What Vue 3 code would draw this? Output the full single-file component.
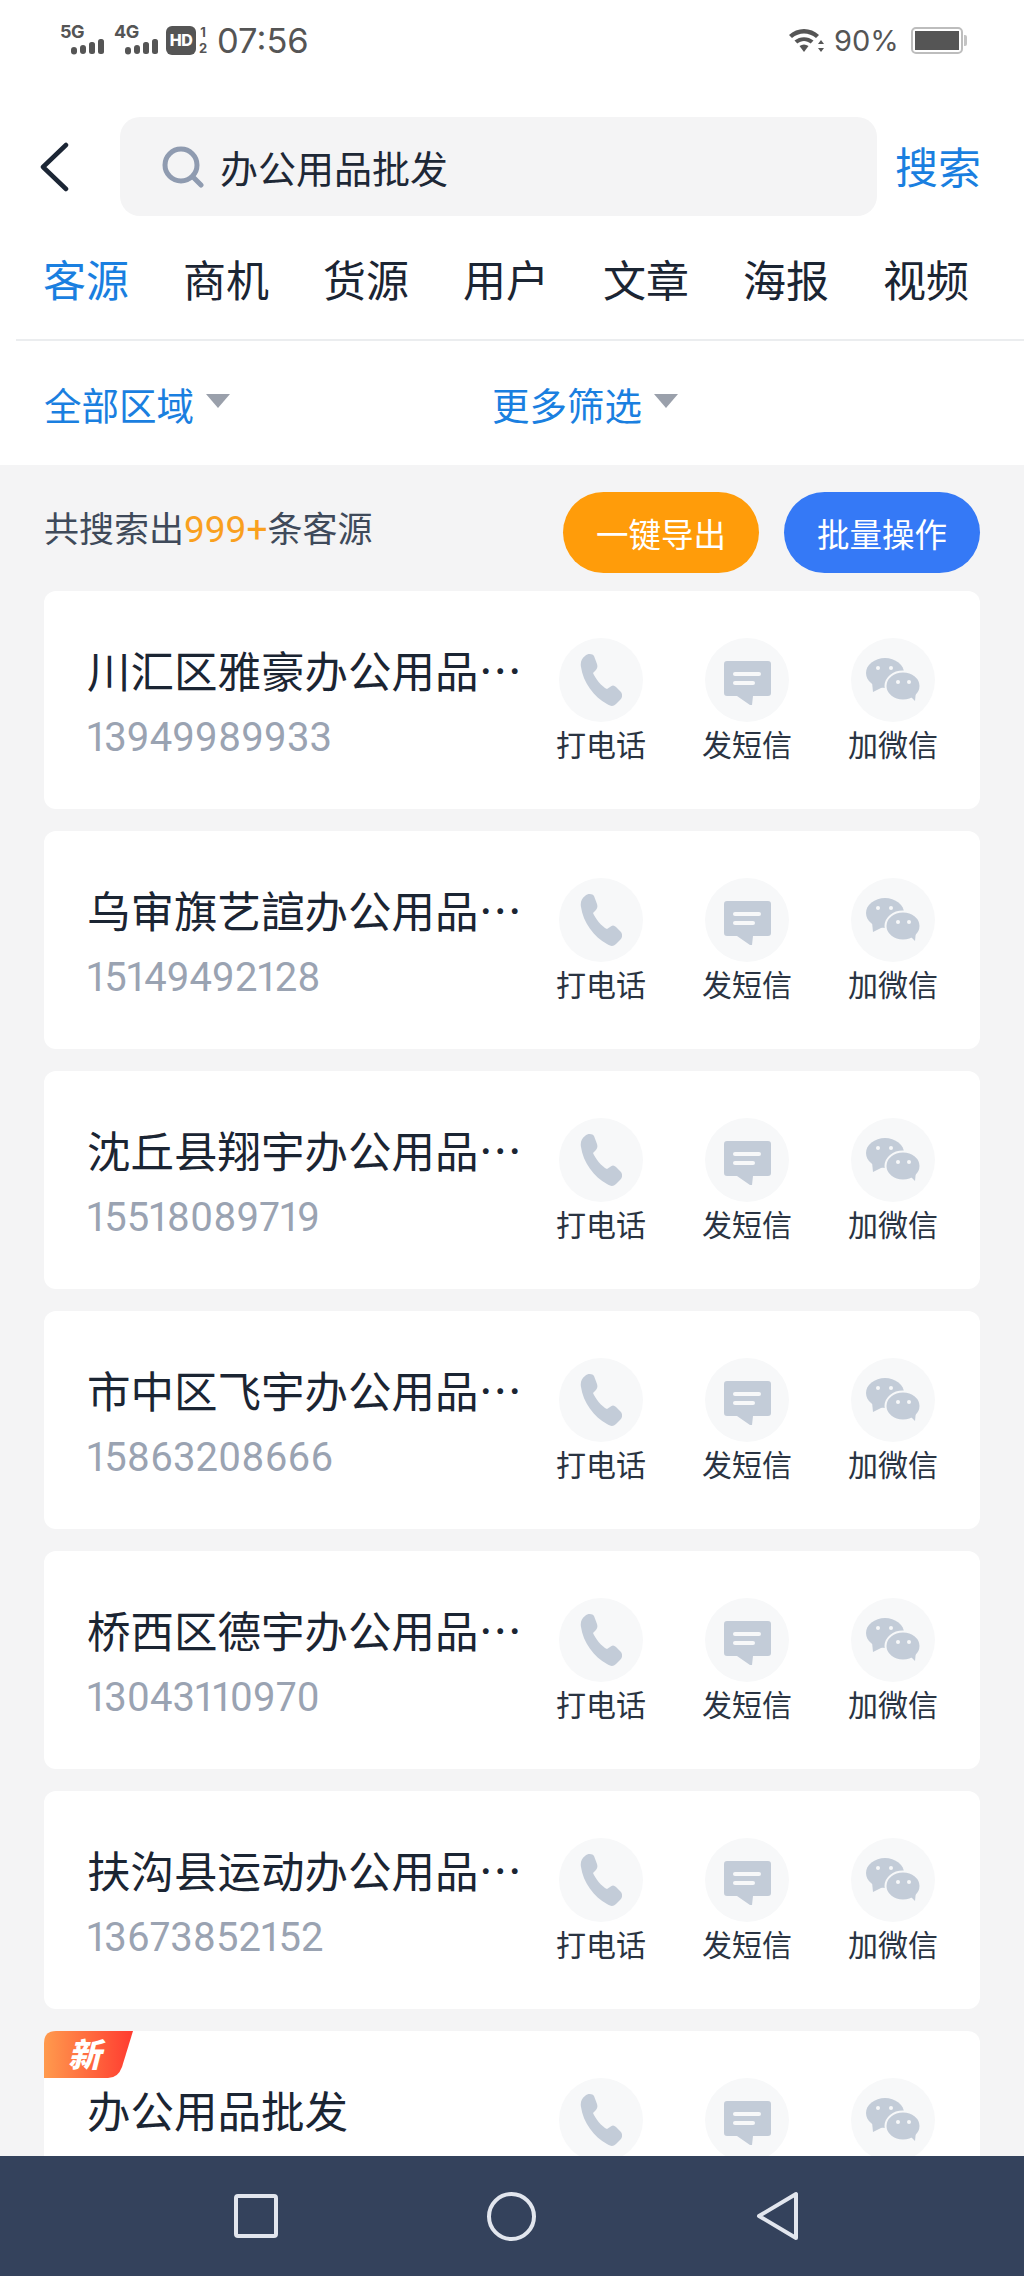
<script setup>
const tabs = ['客源', '商机', '货源', '用户', '文章', '海报', '视频']
const filters = ['全部区域', '更多筛选']
const cards = [
  { name: '川汇区雅豪办公用品…', phone: '13949989933' },
  { name: '乌审旗艺諠办公用品…', phone: '15149492128' },
  { name: '沈丘县翔宇办公用品…', phone: '15518089719' },
  { name: '市中区飞宇办公用品…', phone: '15863208666' },
  { name: '桥西区德宇办公用品…', phone: '13043110970' },
  { name: '扶沟县运动办公用品…', phone: '13673852152' },
  { name: '办公用品批发', phone: '', isNew: true }
]
</script>

<template>
  <div class="page">
    <div class="status">
      <div class="sig">
        <span class="net">5G</span>
        <svg class="bars" width="33" height="16" viewBox="0 0 33 16"><rect x="0" y="8" width="6" height="7.500" rx="3"/><rect x="9" y="6" width="6" height="9" rx="3"/><rect x="18" y="3" width="6" height="12" rx="2.500"/><rect x="27" y="0" width="6" height="15" rx="2.500"/></svg>
      </div>
      <div class="sig">
        <span class="net">4G</span>
        <svg class="bars" width="33" height="16" viewBox="0 0 33 16"><rect x="0" y="8" width="6" height="7.500" rx="3"/><rect x="9" y="6" width="6" height="9" rx="3"/><rect x="18" y="3" width="6" height="12" rx="2.500"/><rect x="27" y="0" width="6" height="15" rx="2.500"/></svg>
      </div>
      <span class="hd">HD</span>
      <span class="sim"><i>1</i><i>2</i></span>
      <span class="time">07:56</span>
      <svg class="wifi" width="36" height="27" viewBox="0 0 36 27">
        <path d="M1 8C9 0 23 0 31 8L28 11C21 5 11 5 4 11Z" fill="#555"/>
        <path d="M6.500 13.500C12 9 20 9 25.500 13.500L22.700 16.500C18.500 13 13.500 13 9.300 16.500Z" fill="#555"/>
        <path d="M11.500 19C14.500 17 17.500 17 20.500 19L16 25Z" fill="#555"/>
        <path d="M33 13L36 17H30ZM33 25L30 21H36Z" fill="#555"/>
      </svg>
      <span class="pct">90%</span>
      <div class="battery"><div class="level"></div></div>
      <div class="tip"></div>
    </div>

    <div class="search-row">
      <svg class="back" width="30" height="50" viewBox="0 0 30 50"><path d="M26 3L3 25L26 47" fill="none" stroke="#1c2635" stroke-width="4.500" stroke-linecap="round" stroke-linejoin="round"/></svg>
      <div class="search-box">
        <svg class="lens" width="42" height="42" viewBox="0 0 42 42"><circle cx="19" cy="19" r="16" fill="none" stroke="#8f9bb0" stroke-width="5"/><path d="M32 32L39 39" stroke="#8f9bb0" stroke-width="5" stroke-linecap="round"/></svg>
        <span class="query">办公用品批发</span>
      </div>
      <span class="search-btn">搜索</span>
    </div>

    <div class="tabs">
      <span v-for="(t, i) in tabs" :key="t" class="tab" :class="{ active: i === 0 }">{{ t }}</span>
    </div>

    <div class="filters">
      <div v-for="f in filters" :key="f" class="filter">
        <span>{{ f }}</span>
        <i class="caret"></i>
      </div>
    </div>

    <div class="body">
      <div class="toolbar">
        <div class="total">共搜索出<em>999+</em>条客源</div>
        <div class="btns">
          <span class="btn orange">一键导出</span>
          <span class="btn blue">批量操作</span>
        </div>
      </div>

      <div class="list">
        <div v-for="c in cards" :key="c.name" class="card">
          <div v-if="c.isNew" class="badge"><span>新</span></div>
          <div class="info">
            <div class="name">{{ c.name }}</div>
            <div v-if="c.phone" class="phone">{{ c.phone }}</div>
          </div>
          <div class="actions">
            <div class="action">
              <span class="circle">
                <svg width="42" height="52" viewBox="0 0 42 52"><path d="M5 2C8-1 13 0 14 2L17 10C18 13 17 15 15 17L13 19C15 24 22 33 27 35L30 33C32 31 34 31 36 33L41 38C43 41 42 44 40 46L36 50C33 53 30 52 27 50C14 43 3 28 1 13C0 8 2 4 5 2Z" fill="#c3ccd8"/></svg>
              </span>
              <span v-if="!c.isNew" class="label">打电话</span>
            </div>
            <div class="action">
              <span class="circle">
                <svg class="msg" width="47" height="45" viewBox="0 0 47 45"><path d="M3 0H44A3 3 0 0 1 47 3V32A3 3 0 0 1 44 35H29L28 44L26 44L13 35H3A3 3 0 0 1 0 32V3A3 3 0 0 1 3 0Z" fill="#c3ccd8"/><rect x="9" y="11" width="28" height="4" rx="2" fill="#f7f8f9"/><rect x="9" y="20" width="22" height="4" rx="2" fill="#f7f8f9"/></svg>
              </span>
              <span v-if="!c.isNew" class="label">发短信</span>
            </div>
            <div class="action">
              <span class="circle">
                <svg width="54" height="44" viewBox="0 0 54 44"><ellipse cx="19" cy="15" rx="19" ry="15" fill="#c3ccd8"/><path d="M6 24L7 34L17 29Z" fill="#c3ccd8"/><circle cx="12" cy="10" r="2" fill="#f7f8f9"/><circle cx="25" cy="10" r="2" fill="#f7f8f9"/><ellipse cx="37" cy="28" rx="17.500" ry="14.500" fill="#c3ccd8" stroke="#f7f8f9" stroke-width="2"/><path d="M44 38L49 43L50 33Z" fill="#c3ccd8"/><circle cx="32" cy="24" r="2" fill="#f7f8f9"/><circle cx="43" cy="24" r="2" fill="#f7f8f9"/></svg>
              </span>
              <span v-if="!c.isNew" class="label">加微信</span>
            </div>
          </div>
        </div>
      </div>
    </div>

    <div class="nav">
      <span class="nav-square"></span>
      <span class="nav-circle"></span>
      <svg class="nav-back" width="44" height="50" viewBox="0 0 44 50"><path d="M40 3V47L3 25Z" fill="none" stroke="#e2e6ee" stroke-width="4" stroke-linejoin="round"/></svg>
    </div>
  </div>
</template>

<style scoped>
.page {
  width: 1024px;
  height: 2276px;
  display: flex;
  flex-direction: column;
  overflow: hidden;
  background: #fff;
  font-family: "Noto Sans CJK SC", sans-serif;
  color: #1b2533;
}
.status {
  height: 80px;
  flex: none;
  display: flex;
  align-items: center;
  padding-left: 60px;
  color: #555;
  font-family: Inter, sans-serif;
}
.sig {
  width: 44px;
  height: 30px;
  margin-right: 10px;
  display: flex;
  flex-direction: column;
}
.net {
  font-size: 18px;
  font-weight: 700;
  line-height: 14px;
  height: 14px;
  letter-spacing: -0.500px;
}
.bars {
  margin-left: 11px;
  fill: #555;
}
.hd {
  width: 30px;
  height: 29px;
  margin-left: -2px;
  border-radius: 6px;
  background: #555;
  color: #fff;
  font-size: 16px;
  font-weight: 800;
  letter-spacing: -0.500px;
  display: flex;
  align-items: center;
  justify-content: center;
}
.sim {
  width: 10px;
  margin-left: 2px;
  display: flex;
  flex-direction: column;
  font-size: 13px;
  font-weight: 700;
  line-height: 16px;
  text-align: center;
}
.sim i {
  font-style: normal;
}
.time {
  margin-left: 9px;
  font-size: 34.500px;
}
.wifi {
  margin-left: auto;
  margin-right: 10px;
}
.pct {
  font-size: 29px;
  width: 63px;
  white-space: nowrap;
}
.battery {
  margin-left: 14px;
  width: 52px;
  height: 27px;
  box-sizing: border-box;
  border: 2px solid #bdbdbd;
  border-radius: 5px;
  padding: 2px;
}
.level {
  height: 100%;
  background: #555;
}
.tip {
  width: 3px;
  height: 11px;
  margin-left: 1px;
  margin-right: 57px;
  background: #c4c4c4;
  border-radius: 0 2px 2px 0;
}
.search-row {
  flex: none;
  margin-top: 37px;
  height: 99px;
  display: flex;
  align-items: center;
  padding-left: 40px;
}
.back {
  flex: none;
}
.search-box {
  margin-left: 50px;
  width: 757px;
  height: 99px;
  flex: none;
  box-sizing: border-box;
  padding-left: 42px;
  background: #f4f4f5;
  border-radius: 20px;
  display: flex;
  align-items: center;
}
.lens {
  flex: none;
}
.query {
  margin-left: 16px;
  font-size: 38px;
  color: #1e2836;
}
.search-btn {
  margin: -3px 0 0 18px;
  font-size: 43px;
  color: #1a7fe0;
}
.tabs {
  flex: none;
  height: 125px;
  margin-left: 16px;
  box-sizing: border-box;
  border-bottom: 2px solid #ebedef;
  padding-left: 27px;
  display: flex;
  gap: 54px;
  align-items: center;
}
.tab {
  font-size: 43px;
  line-height: 60px;
  width: 86px;
  white-space: nowrap;
  margin-top: 1px;
}
.tab.active {
  color: #1a7fe0;
}
.filters {
  flex: none;
  height: 124px;
  display: flex;
  align-items: center;
  padding-left: 44px;
}
.filter {
  width: 448px;
  display: flex;
  align-items: center;
  font-size: 37.500px;
  color: #1a7fe0;
}
.caret {
  width: 0;
  height: 0;
  margin-left: 12px;
  margin-bottom: 4px;
  border-left: 12px solid transparent;
  border-right: 12px solid transparent;
  border-top: 14px solid #9aa0ab;
}
.body {
  flex: 1;
  min-height: 0;
  overflow: hidden;
  background: #f4f4f5;
  padding: 0 44px;
}
.toolbar {
  height: 126px;
  display: flex;
  align-items: flex-start;
  justify-content: space-between;
}
.total {
  margin-top: 37px;
  font-size: 35px;
  line-height: 50px;
  color: #3f4a5a;
}
.total em {
  font-style: normal;
  color: #f9a01e;
  font-family: Roboto, sans-serif;
  font-size: 37px;
}
.btns {
  margin-top: 27px;
  display: flex;
  gap: 25px;
}
.btn {
  width: 196px;
  height: 81px;
  border-radius: 41px;
  display: flex;
  align-items: center;
  justify-content: center;
  color: #fff;
  font-size: 32.500px;
}
.orange {
  background: #ff9c0a;
}
.blue {
  background: #3579f6;
}
.list {
  display: flex;
  flex-direction: column;
  gap: 22px;
}
.card {
  flex: none;
  position: relative;
  height: 218px;
  background: #fff;
  border-radius: 12px;
  display: flex;
  justify-content: space-between;
}
.badge {
  position: absolute;
  left: 0;
  top: 0;
  width: 89px;
  height: 47px;
  background: linear-gradient(90deg, #ff9a4d, #ff3b30);
  clip-path: path("M12 0H89L78 36Q74 47 64 47H0V12Q0 0 12 0Z");
  color: #fff;
  font-size: 33px;
  font-weight: 900;
  font-style: italic;
  line-height: 45px;
  padding-left: 24px;
  box-sizing: border-box;
}
.info {
  padding: 49px 0 0 43px;
}
.name {
  font-size: 43.500px;
  line-height: 60px;
  white-space: nowrap;
}
.phone {
  margin-top: 13px;
  font-family: Roboto, sans-serif;
  font-variant-numeric: proportional-nums;
  font-size: 40px;
  line-height: 50px;
  color: #9aa3b2;
}
.actions {
  display: flex;
  gap: 62px;
  padding: 47px 45px 0 0;
}
.action {
  width: 84px;
  display: flex;
  flex-direction: column;
  align-items: center;
}
.circle {
  width: 84px;
  height: 84px;
  flex: none;
  border-radius: 50%;
  background: #f7f8f9;
  display: flex;
  align-items: center;
  justify-content: center;
}
.msg {
  margin-top: 6px;
}
.label {
  margin-top: -2px;
  font-size: 30px;
  line-height: 46px;
  white-space: nowrap;
  color: #2a3442;
}
.nav {
  flex: none;
  height: 120px;
  background: #34425c;
  display: flex;
  align-items: center;
  padding-left: 234px;
}
.nav-square {
  width: 44px;
  height: 44px;
  box-sizing: border-box;
  border: 4px solid #e2e6ee;
  border-radius: 4px;
}
.nav-circle {
  width: 49px;
  height: 49px;
  box-sizing: border-box;
  border: 4px solid #e2e6ee;
  border-radius: 50%;
  margin-left: 209px;
}
.nav-back {
  margin-left: 220px;
}
</style>
